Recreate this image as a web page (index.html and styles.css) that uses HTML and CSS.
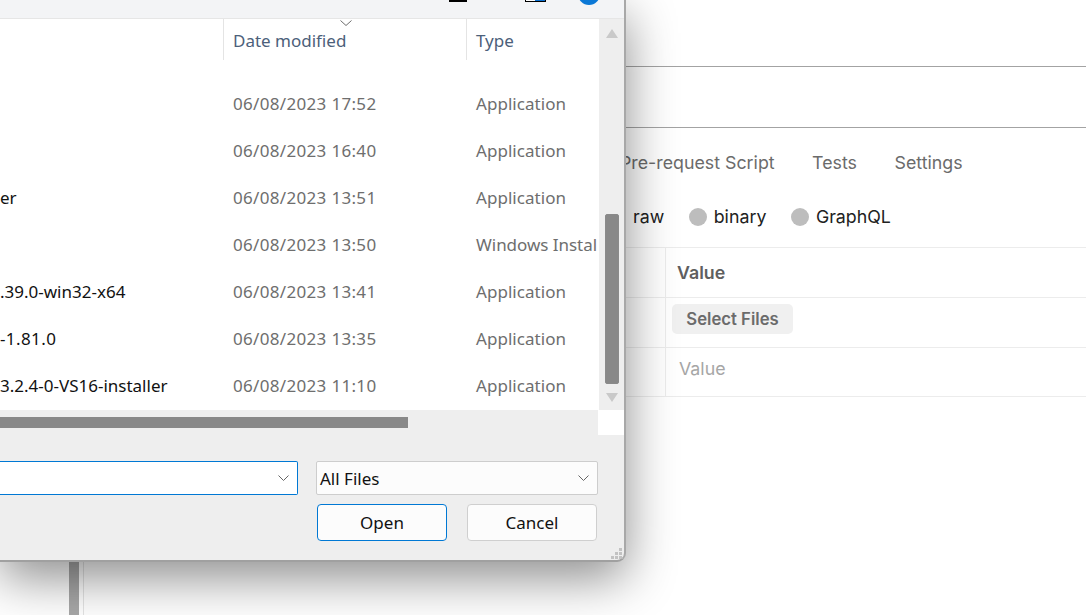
FILE: index.html
```html
<!DOCTYPE html>
<html lang="en">
<head>
<meta charset="utf-8">
<title>Open file</title>
<link rel="stylesheet" href="styles.css">
</head>
<body>
<div class="app">
  <div class="side"></div>
  <div class="splitter"></div>
  <div class="gutter"></div>
  <main class="main">
    <div class="bar bar-one"></div>
    <div class="bar bar-two"></div>
    <nav class="tabs">
      <span>Pre-request Script</span>
      <span>Tests</span>
      <span>Settings</span>
    </nav>
    <div class="radios">
      <label class="radio"><i></i>raw</label>
      <label class="radio"><i></i>binary</label>
      <label class="radio"><i></i>GraphQL</label>
    </div>
    <div class="kv">
      <div class="kv-row kv-head"><div class="kv-key"></div><div class="kv-val"><b>Value</b></div></div>
      <div class="kv-row"><div class="kv-key"></div><div class="kv-val kv-btn"><button class="select">Select Files</button></div></div>
      <div class="kv-row"><div class="kv-key"></div><div class="kv-val kv-ph">Value</div></div>
    </div>
  </main>
</div>

<section class="dialog">
  <header class="titlebar">
    <span class="ico-line"></span>
    <span class="ico-box"><em></em></span>
    <span class="ico-circle"></span>
  </header>
  <div class="listwrap">
    <div class="list">
      <div class="row head">
        <div class="c-name"></div>
        <div class="c-date">Date modified
          <svg class="sort" width="12" height="6" viewBox="0 0 12 6"><path d="M.5.5 6 5.5 11.5.5" fill="none" stroke="#6d6d6d"/></svg>
        </div>
        <div class="c-type">Type</div>
      </div>
      <div class="row"><div class="c-name"></div><div class="c-date">06/08/2023 17:52</div><div class="c-type">Application</div></div>
      <div class="row"><div class="c-name"></div><div class="c-date">06/08/2023 16:40</div><div class="c-type">Application</div></div>
      <div class="row"><div class="c-name">er</div><div class="c-date">06/08/2023 13:51</div><div class="c-type">Application</div></div>
      <div class="row"><div class="c-name"></div><div class="c-date">06/08/2023 13:50</div><div class="c-type c-tight">Windows Instal</div></div>
      <div class="row"><div class="c-name">.39.0-win32-x64</div><div class="c-date">06/08/2023 13:41</div><div class="c-type">Application</div></div>
      <div class="row"><div class="c-name c-wide">-1.81.0</div><div class="c-date">06/08/2023 13:35</div><div class="c-type">Application</div></div>
      <div class="row"><div class="c-name">3.2.4-0-VS16-installer</div><div class="c-date">06/08/2023 11:10</div><div class="c-type">Application</div></div>
    </div>
    <div class="vscroll">
      <svg class="arrow" width="12" height="9" viewBox="0 0 12 9"><path d="M6 0 12 9H0Z" fill="#c9c9c9"/></svg>
      <div class="vthumb"></div>
      <svg class="arrow" width="12" height="9" viewBox="0 0 12 9"><path d="M0 0H12L6 9Z" fill="#c9c9c9"/></svg>
    </div>
  </div>
  <div class="hscrollrow">
    <div class="htrack"><div class="hthumb"></div></div>
    <div class="corner"></div>
  </div>
  <footer class="foot">
    <div class="combos">
      <div class="combo combo-active">
        <span></span>
        <svg width="11" height="6" viewBox="0 0 11 6"><path d="M.5.5 5.5 5.5 10.5.5" fill="none" stroke="#666"/></svg>
      </div>
      <div class="combo">
        <span>All Files</span>
        <svg width="11" height="6" viewBox="0 0 11 6"><path d="M.5.5 5.5 5.5 10.5.5" fill="none" stroke="#666"/></svg>
      </div>
    </div>
    <div class="actions">
      <button class="btn btn-primary">Open</button>
      <button class="btn">Cancel</button>
    </div>
    <svg class="grip" width="11" height="11" viewBox="0 0 11 11" fill="#c2c2c2">
      <rect x="8" y="0" width="3" height="3"/>
      <rect x="4" y="4" width="3" height="3"/><rect x="8" y="4" width="3" height="3"/>
      <rect x="0" y="8" width="3" height="3"/><rect x="4" y="8" width="3" height="3"/><rect x="8" y="8" width="3" height="3"/>
    </svg>
  </footer>
</section>
</body>
</html>
```

FILE: styles.css
```css
* { box-sizing: border-box; }
html, body { margin: 0; height: 100%; overflow: hidden; background: #fff; }
body { position: relative; width: 1086px; height: 615px; }

.app { display: flex; height: 615px; font-family: Inter, "Liberation Sans", sans-serif; }
.side { width: 69px; }
.splitter { width: 10px; background: #a8a8a8; }
.gutter { width: 5px; border-right: 1px solid #e4e4e4; }
.main { flex: 1; min-width: 0; }

.bar { border-bottom: 1px solid #a3a3a3; }
.bar-one { height: 67px; }
.bar-two { height: 61px; }

.tabs { display: flex; gap: 37.5px; height: 70px; padding: 25px 0 0 536px; font-size: 17.8px; line-height: 20px; color: #6b6b6b; }
.radios { display: flex; height: 50px; padding: 9px 0 0 524px; font-size: 17.8px; line-height: 20px; color: #212121; border-bottom: 1px solid #ececec; }
.radio { display: flex; align-items: center; gap: 7px; margin-right: 24.5px; height: 20px; }
.radio i { width: 18px; height: 18px; border-radius: 50%; background: #bdbdbd; }

.kv-row { display: flex; height: 50px; border-bottom: 1px solid #ececec; }
.kv-row:last-child { height: 49px; }
.kv-key { width: 581px; }
.kv-val { flex: 1; border-left: 1px solid #ececec; padding-left: 12px; font-size: 17.8px; line-height: 49px; }
.kv-val b { font-weight: 600; color: #5f5f5f; margin-left: -1px; }
.kv-btn { padding: 6px 0 0 6px; }
.kv-ph { padding-left: 13px; color: #a6a6a6; line-height: 41px; }
.select { display: block; width: 121px; height: 30px; border: 0; border-radius: 5px; background: #f0f0f0; color: #6b6b6b; font: 600 16.7px/30px Inter, "Liberation Sans", sans-serif; padding: 0; }

.dialog { position: absolute; left: 0; top: 0; width: 626px; height: 562px; display: flex; flex-direction: column; background: #eee; border-right: 2px solid #a8a8a8; border-bottom: 2px solid #a0a0a0; border-bottom-right-radius: 9px; box-shadow: 0 16px 50px rgba(0,0,0,.45); font-family: "Noto Sans", "Open Sans", sans-serif; font-size: 17px; overflow: hidden; }

.titlebar { flex: none; height: 19px; display: flex; align-items: flex-start; background: #f3f4f6; border-bottom: 1px solid #e6e6e6; padding-left: 449px; overflow: hidden; }
.ico-line { width: 18px; height: 2px; background: #000; }
.ico-box { width: 21px; height: 2px; margin-left: 58px; border: 1px solid #000; border-top: 0; background: #fff; display: flex; justify-content: flex-end; }
.ico-box em { width: 10px; height: 1px; background: #0a6fd0; }
.ico-circle { width: 22px; height: 22px; margin: -17px 0 0 32px; border-radius: 50%; background: #0a78d6; flex: none; }

.listwrap { flex: none; height: 391px; display: flex; background: #fff; }
.list { flex: 1; min-width: 0; overflow: hidden; }
.row { display: grid; grid-template-columns: 223px 243px 133px; height: 47px; line-height: 47px; }
.row > div { white-space: nowrap; overflow: hidden; }
.head { height: 61px; line-height: 44px; color: #4c607a; }
.head > div { height: 41px; }
.c-name { color: #111; }
.c-wide { letter-spacing: .4px; }
.c-date { padding-left: 10px; color: #6e6e6e; letter-spacing: .32px; }
.c-type { padding-left: 10px; color: #6e6e6e; letter-spacing: .05px; }
.c-tight { letter-spacing: -.03px; }
.head .c-date, .head .c-type { color: #4c607a; border-left: 1px solid #e4e4e4; position: relative; letter-spacing: 0; }
.head .c-date { padding-left: 9px; }
.head .c-type { padding-left: 9px; }
.sort { position: absolute; left: 116px; top: 1px; }

.vscroll { flex: none; width: 25px; display: flex; flex-direction: column; align-items: center; background: #eeeeee; padding-top: 10px; }
.vthumb { width: 14px; height: 170px; margin-top: 176px; background: #888; border: 1px solid #8a8a8a; border-radius: 2px; }
.vscroll .arrow:last-child { margin-top: 9px; }

.hscrollrow { flex: none; height: 25px; display: flex; }
.htrack { flex: 1; padding-top: 7px; }
.hthumb { width: 408px; height: 11px; background: #888; }
.corner { width: 26px; background: #fff; }

.foot { flex: 1; position: relative; padding: 26px 26px 0 0; }
.combos { display: flex; justify-content: space-between; }
.combo { height: 34px; display: flex; align-items: center; justify-content: space-between; padding: 0 8px 0 3px; background: #fcfcfc; border: 1px solid #cdcdcd; border-radius: 2px; width: 282px; color: #111; }
.combo-active { width: 298px; background: #fff; border-color: #0078d4; border-left: 0; border-radius: 0 2px 2px 0; }
.actions { display: flex; justify-content: flex-end; gap: 20px; margin-top: 9px; padding-right: 1px; }
.btn { width: 130px; height: 37px; padding: 0; border: 1px solid #cfcfcf; border-radius: 4px; background: #fcfcfc; color: #111; font: 17px/35px "Noto Sans", "Open Sans", sans-serif; }
.btn-primary { border-color: #0078d4; }
.grip { position: absolute; right: 2px; bottom: 1px; }
```
